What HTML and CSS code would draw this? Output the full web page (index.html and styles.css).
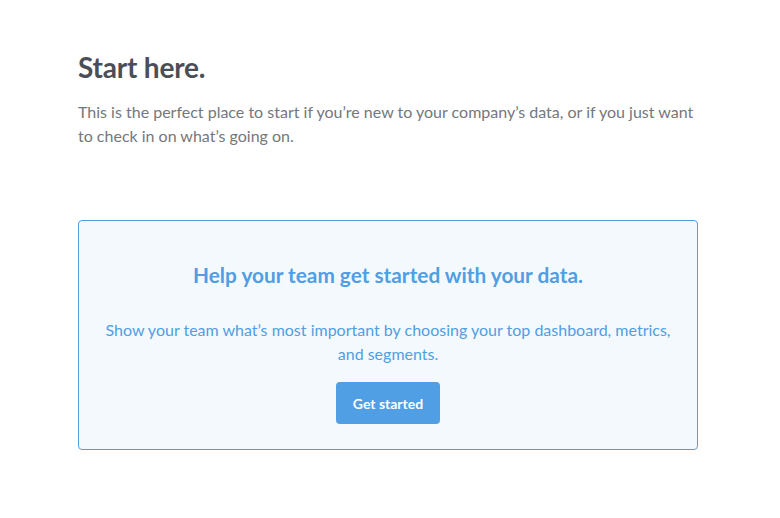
FILE: index.html
```html
<!DOCTYPE html>
<html>
<head>
<meta charset="utf-8">
<link rel="stylesheet" href="styles.css">
</head>
<body>
<main class="page">
  <section class="intro">
    <h1 class="title">Start here.</h1>
    <p class="lead">This is the perfect place to start if you’re new to your company’s data, or if you just want to check in on what’s going on.</p>
  </section>
  <section class="cta">
    <h2 class="cta-title">Help your team get started with your data.</h2>
    <p class="cta-text">Show your team what’s most important by choosing your top dashboard, metrics, and segments.</p>
    <button class="btn">Get started</button>
  </section>
</main>
</body>
</html>
```
FILE: styles.css
```css
html, body {
  margin: 0;
  padding: 0;
  background: #fff;
}
body {
  font-family: Lato, "Noto Sans", sans-serif;
}
.page {
  width: 620px;
  margin-left: 78px;
  padding-top: 47px;
}
.title {
  margin: 0;
  font-size: 28px;
  line-height: 40px;
  font-weight: 700;
  letter-spacing: -0.2px;
  color: #4a4f56;
}
.lead {
  margin: 13px 0 0;
  font-size: 16px;
  line-height: 24px;
  color: #74777c;
}
.cta {
  margin-top: 72px;
  border: 1px solid #509ee3;
  border-radius: 4px;
  background: #f4f9fd;
  padding: 40px 20px 0;
  text-align: center;
  height: 230px;
  box-sizing: border-box;
}
.cta-title {
  margin: 0;
  font-size: 20.8px;
  line-height: 28px;
  font-weight: 700;
  color: #509ee3;
}
.cta-text {
  margin: 29px 0 0;
  font-size: 16px;
  line-height: 24px;
  color: #509ee3;
}
.btn {
  margin-top: 16px;
  width: 104px;
  height: 42px;
  border: none;
  border-radius: 4px;
  background: #509ee3;
  color: #fff;
  font-family: Lato, "Noto Sans", sans-serif;
  font-size: 14px;
  font-weight: 700;
  cursor: pointer;
}
```
